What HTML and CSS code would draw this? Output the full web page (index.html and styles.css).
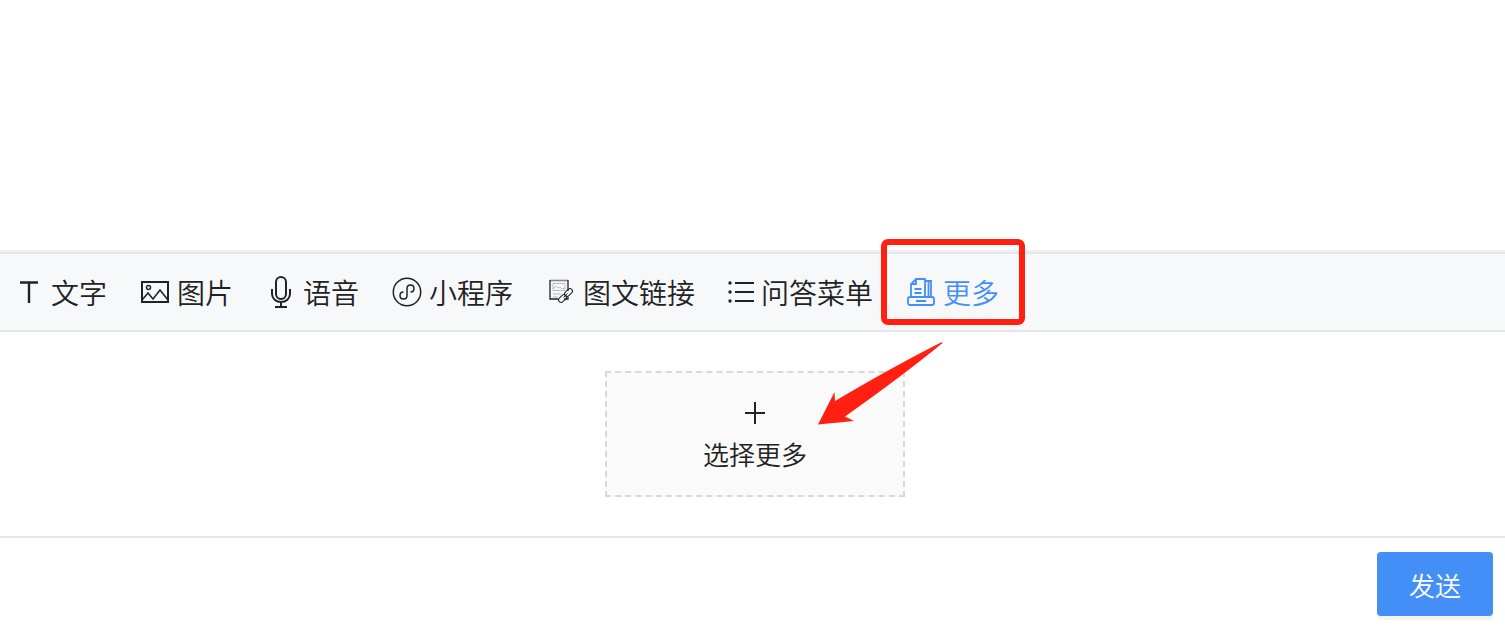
FILE: index.html
```
<!DOCTYPE html>
<html lang="zh-CN">
<head>
    <meta charset="UTF-8">
    <meta name="viewport" content="width=device-width, initial-scale=1.0">
    <title>发送消息</title>
    <link rel="stylesheet" href="styles.css">
</head>
<body>
    <main class="messages"></main>

    <nav class="toolbar">
        <button class="tool" type="button">
            <svg class="icon" viewBox="0 0 28 28"><path d="M5 4.5h18M14 4.5V25" stroke-width="2.4"/></svg>
            <span>文字</span>
        </button>
        <button class="tool" type="button">
            <svg class="icon" viewBox="0 0 28 28"><path d="M1 4h26v20H1z" stroke-width="2"/><path d="M1 22l6-7 5 6 7-9 8 10" stroke-width="1.6"/><circle cx="7.5" cy="9.5" r="2" stroke-width="1.5"/></svg>
            <span>图片</span>
        </button>
        <button class="tool" type="button">
            <svg class="icon" viewBox="0 0 28 28"><rect x="9" y="-1" width="10" height="22" rx="5" stroke-width="2"/><path d="M5 11v5a9 8 0 0 0 18 0v-5M14 24v5M8 29h12" stroke-width="2"/></svg>
            <span>语音</span>
        </button>
        <button class="tool" type="button">
            <svg class="icon" viewBox="0 0 28 28"><circle cx="14" cy="14" r="13.7" stroke-width="1.5"/><path d="M10.5 14c-2 0-3.5 1.5-3.500 3.500s1.500 3.500 3.500 3.500 3.500-1.500 3.500-3.500v-7c0-2 1.500-3.500 3.500-3.500s3.500 1.500 3.500 3.500-1.500 3.500-3.500 3.500" stroke-width="1.5"/></svg>
            <span>小程序</span>
        </button>
        <button class="tool" type="button">
            <svg class="icon" viewBox="0 0 28 28">
                <path d="M3 2.500h18" stroke="#85898e" stroke-width="1.6"/>
                <path d="M21 2v11M3 2v19h8M17 21h4v-2" stroke-width="1.3"/>
                <path d="M6 5.500h12v7H6zM6 11l3-3 2 2 2-1 2 2 3-1M6 16h8M6 19h5" stroke="#a9adb2" stroke-width="0.8"/>
                <rect x="17" y="12" width="9" height="5" rx="2.5" transform="rotate(-45 21.5 14.5)" stroke-width="1"/>
                <rect x="11" y="18" width="9" height="5" rx="2.5" transform="rotate(-45 15.5 20.5)" stroke-width="1"/>
                <path d="M16.5 19.500l4-4" stroke-width="1"/>
            </svg>
            <span>图文链接</span>
        </button>
        <button class="tool tool-list" type="button">
            <svg class="icon" viewBox="0 0 28 28"><path d="M6 5h19M6 14h19M6 23h19" stroke-width="2.2"/><path d="M1 5h.01M1 14h.01M1 23h.01" stroke-width="3.4" stroke-linecap="round"/></svg>
            <span>问答菜单</span>
        </button>
        <button class="tool active" type="button">
            <svg class="icon" viewBox="0 0 28 28">
                <path d="M4 19V6l5-5h9v18M9 1v5H4M18 3h6v16M21.500 3v16M7.500 11h7M7.500 15h7M9 23h10" stroke-width="1.8"/>
                <rect x="1" y="19" width="26" height="8" rx="2" stroke-width="1.8"/>
            </svg>
            <span>更多</span>
            <span class="highlight"></span>
        </button>
    </nav>

    <section class="content">
        <div class="picker">
            <button class="choose" type="button">
                <svg class="plus" viewBox="0 0 22 22"><path d="M1 11h20M11 0v22" stroke-width="2"/></svg>
                <span>选择更多</span>
            </button>
            <svg class="arrow" viewBox="0 0 126 84"><path d="M125 1Q79 24 18 60L17.500 51 1 83.500 37 80 28 75.500Q88 33 125.500 2z"/></svg>
        </div>
    </section>

    <footer class="footer">
        <button class="send" type="button">发送</button>
    </footer>
</body>
</html>
```
FILE: styles.css
```
* {
    box-sizing: border-box;
}
body {
    margin: 0;
    min-height: 100vh;
    display: flex;
    flex-direction: column;
    background: #fff;
    color: #222;
    font-family: "Noto Sans CJK SC", sans-serif;
    font-weight: 350;
}
button {
    border: none;
    padding: 0;
    background: none;
    color: inherit;
    font: inherit;
    cursor: pointer;
}
svg {
    fill: none;
    stroke: currentColor;
    overflow: visible;
}
.messages {
    flex: 1;
    border-bottom: 2px solid #f1f1f3;
}
.toolbar {
    display: flex;
    align-items: center;
    gap: 34px;
    height: 80px;
    padding: 0 15px;
    background: #f7f8fa;
    border-top: 2px solid #e5e6ea;
    border-bottom: 2px solid #e5e6ea;
}
.tool {
    position: relative;
    display: flex;
    align-items: center;
    gap: 8px;
    font-size: 28px;
    line-height: 40px;
    white-space: nowrap;
}
.tool-list {
    gap: 4px;
}
.tool.active {
    color: #448ef7;
}
.icon {
    width: 28px;
    height: 28px;
    flex: none;
}
.highlight {
    position: absolute;
    top: -33px;
    bottom: -13px;
    left: -26px;
    right: -26px;
    border: 6px solid #ff2012;
    border-radius: 7px;
}
.content {
    display: flex;
    justify-content: center;
    padding: 39px 0 39px 5px;
    border-bottom: 2px solid #e5e6ea;
}
.picker {
    position: relative;
}
.choose {
    display: flex;
    flex-direction: column;
    align-items: center;
    justify-content: center;
    gap: 12px;
    width: 300px;
    height: 126px;
    padding-top: 6px;
    background: #fafafa;
    border: 2px dashed #d9d9d9;
    font-size: 26px;
    line-height: 36px;
}
.plus {
    width: 22px;
    height: 22px;
}
.arrow {
    position: absolute;
    top: -30px;
    left: 212px;
    width: 126px;
    height: 84px;
    fill: #ff2012;
    stroke: none;
}
.footer {
    display: flex;
    justify-content: flex-end;
    padding: 14px 12px 12px;
}
.send {
    width: 116px;
    height: 64px;
    border-radius: 4px;
    background: #448ef7;
    box-shadow: 0 4px 0 #f3f3f3;
    color: #fff;
    font-size: 26px;
}
```
